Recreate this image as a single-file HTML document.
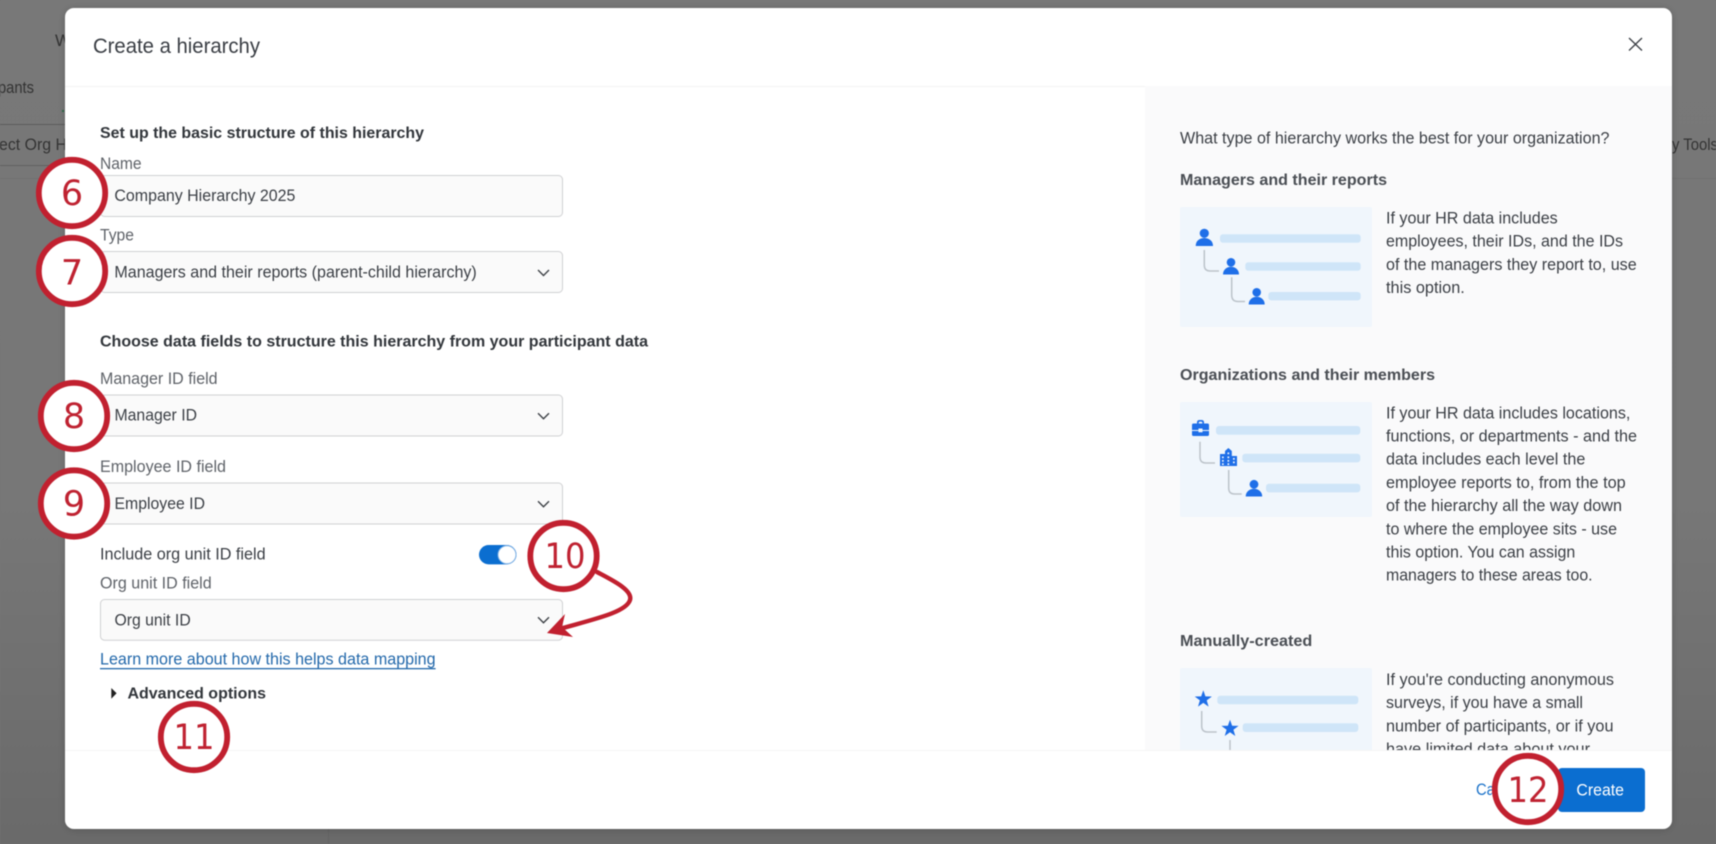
<!DOCTYPE html>
<html lang="en">
<head>
<meta charset="utf-8">
<title>Create a hierarchy</title>
<style>
html,body{margin:0;padding:0;width:1716px;height:844px;overflow:hidden;background:#757575}
svg{display:block;position:absolute;left:0;top:0;filter:blur(.45px)}
text{font-family:"Liberation Sans",Arial,sans-serif;font-size:16.5px;fill:#3b3f45}
.t{font-size:21.5px;fill:#3a3e44}
.b{font-weight:bold;fill:#32363b;font-size:16px}
.rh{font-weight:bold;fill:#4a4e54;font-size:16px}
.l{fill:#5f6369}
.bg{fill:#333;font-size:17px}
.n{font-family:"DejaVu Sans",sans-serif;font-size:35px;fill:#bf2231;text-anchor:middle}
.f{fill:#fafafa;stroke:#d0d1d3;stroke-width:1}
.fb{fill:none;stroke:#bcbdc0;stroke-width:1.2}
.ch{fill:none;stroke:#3f4348;stroke-width:1.4}
.bar{fill:#cfe5f8}
.cn{fill:none;stroke:#bcc3ca;stroke-width:1.5}
.bl{fill:#1f6fe8}
.c{fill:#fff;stroke:#c1202f;stroke-width:5.8}
</style>
</head>
<body>
<svg width="1716" height="844" viewBox="0 0 1716 844" xmlns="http://www.w3.org/2000/svg">
<defs>
<linearGradient id="bgg" x1="0" y1="0" x2="0" y2="1"><stop offset="0" stop-color="#787878"/><stop offset=".6" stop-color="#777"/><stop offset="1" stop-color="#6a6a6a"/></linearGradient>
<filter id="sh" x="-5%" y="-5%" width="110%" height="110%"><feDropShadow dx="0" dy="1" stdDeviation="4" flood-color="#000" flood-opacity=".18"/></filter>
<clipPath id="cp"><rect x="1145" y="87" width="527" height="663"/></clipPath>
</defs>

<!-- background page -->
<rect width="1716" height="844" fill="url(#bgg)"/>
<text class="bg" x="55" y="46">W</text>
<text class="bg" x="-2" y="93" textLength="36" lengthAdjust="spacingAndGlyphs">pants</text>
<rect x="62" y="110" width="2" height="2" fill="#2f6b4a"/>
<text class="bg" x="-1" y="150" textLength="68" lengthAdjust="spacingAndGlyphs">ect Org H</text>
<text class="bg" x="1672" y="150" textLength="46" lengthAdjust="spacingAndGlyphs">y Tools</text>
<rect x="0" y="124" width="66" height="1" fill="#5c5c5c"/>
<rect x="0" y="165" width="66" height="1" fill="#606060"/>
<rect x="0" y="178" width="66" height="1" fill="#707070"/>
<rect x="1672" y="178" width="44" height="1" fill="#707070"/>
<rect x="328" y="829" width="1" height="15" fill="#636363"/>

<!-- modal -->
<rect x="65" y="8" width="1607" height="821" rx="9" fill="#fff" filter="url(#sh)"/>
<rect x="65" y="86" width="1080" height="1" fill="#f3f3f3"/>
<rect x="1145" y="86" width="527" height="664" fill="#fafafb"/>

<text class="t" x="93" y="53" textLength="167" lengthAdjust="spacingAndGlyphs">Create a hierarchy</text>
<path d="M1629 38L1642 50.5M1642 38L1629 50.5" stroke="#3a3e44" stroke-width="1.3" fill="none"/>

<!-- left form -->
<text class="b" x="100" y="138" textLength="324" lengthAdjust="spacingAndGlyphs">Set up the basic structure of this hierarchy</text>
<text class="l" x="100" y="169" textLength="41.6" lengthAdjust="spacingAndGlyphs">Name</text>
<rect class="f" x="100.5" y="175.5" width="462" height="41" rx="4"/>
<text x="114.4" y="201" textLength="181" lengthAdjust="spacingAndGlyphs">Company Hierarchy 2025</text>

<text class="l" x="100" y="240.5" textLength="34" lengthAdjust="spacingAndGlyphs">Type</text>
<rect class="f" x="100.5" y="251.5" width="462" height="41" rx="4"/>
<text x="114.4" y="277.5" textLength="362.4" lengthAdjust="spacingAndGlyphs">Managers and their reports (parent-child hierarchy)</text>
<path class="ch" d="M538 270L543.5 275.5L549 270"/>

<text class="b" x="100" y="346.5" textLength="548" lengthAdjust="spacingAndGlyphs">Choose data fields to structure this hierarchy from your participant data</text>
<text class="l" x="100" y="384" textLength="117.6" lengthAdjust="spacingAndGlyphs">Manager ID field</text>
<rect class="f" x="100.5" y="395" width="462" height="41" rx="4"/>
<text x="114.5" y="420.7" textLength="82.5" lengthAdjust="spacingAndGlyphs">Manager ID</text>
<path class="ch" d="M538 413.2L543.5 418.7L549 413.2"/>

<text class="l" x="100" y="472" textLength="126" lengthAdjust="spacingAndGlyphs">Employee ID field</text>
<rect class="f" x="100.5" y="483" width="462" height="41" rx="4"/>
<text x="114.5" y="509" textLength="90.5" lengthAdjust="spacingAndGlyphs">Employee ID</text>
<path class="ch" d="M538 501.2L543.5 506.7L549 501.2"/>

<text x="100" y="559.3" textLength="165.6" lengthAdjust="spacingAndGlyphs">Include org unit ID field</text>
<rect x="479" y="545" width="37.5" height="19.4" rx="9.7" fill="#0b6ed0"/>
<circle cx="507" cy="554.7" r="9" fill="#fff" stroke="#7db0e4" stroke-width="1"/>

<text class="l" x="100" y="588.3" textLength="111.7" lengthAdjust="spacingAndGlyphs">Org unit ID field</text>
<rect class="f" x="100.5" y="599.5" width="462" height="40.7" rx="4"/>
<text x="114.5" y="625.7" textLength="76.2" lengthAdjust="spacingAndGlyphs">Org unit ID</text>
<path class="ch" d="M538 617.2L543.5 622.7L549 617.2"/>

<text x="100" y="664.7" textLength="335.6" lengthAdjust="spacingAndGlyphs" style="fill:#2469ab">Learn more about how this helps data mapping</text>
<rect x="100" y="668" width="335.6" height="1.3" fill="#2469ab"/>

<path d="M111.3 688L116.6 693.3L111.3 698.7Z" fill="#222"/>
<text class="b" x="127.5" y="698.3" textLength="138.5" lengthAdjust="spacingAndGlyphs">Advanced options</text>

<!-- right panel -->
<g clip-path="url(#cp)">
<text x="1180" y="143.3" textLength="429.5" lengthAdjust="spacingAndGlyphs">What type of hierarchy works the best for your organization?</text>
<text class="rh" x="1180" y="185" textLength="207" lengthAdjust="spacingAndGlyphs">Managers and their reports</text>

<!-- illustration 1 -->
<rect x="1180" y="207" width="192" height="120" rx="2" fill="#f0f6fc"/>
<rect class="bar" x="1220" y="234.3" width="140.7" height="8.4" rx="3"/>
<rect class="bar" x="1245.3" y="262.3" width="115.4" height="8.4" rx="3"/>
<rect class="bar" x="1268.3" y="292" width="92.4" height="8.4" rx="3"/>
<path class="cn" d="M1204.3 250V265Q1204.3 271 1210.3 271H1219"/>
<path class="cn" d="M1231.7 277.3V295Q1231.7 301.5 1238 301.5H1245"/>
<circle class="bl" cx="1204.3" cy="233.3" r="4.6"/>
<path class="bl" d="M1195.7 246C1195.7 240.5 1200 238 1204.3 238C1208.6 238 1213 240.5 1213 246Z"/>
<circle class="bl" cx="1231" cy="262.3" r="4.3"/>
<path class="bl" d="M1223 274.5C1223 269.5 1227 266.8 1231 266.8C1235 266.8 1239 269.5 1239 274.5Z"/>
<circle class="bl" cx="1256.7" cy="292.3" r="4.3"/>
<path class="bl" d="M1248.7 304.5C1248.7 299.5 1252.7 296.8 1256.7 296.8C1260.7 296.8 1264.7 299.5 1264.7 304.5Z"/>

<text x="1386" y="223.3" textLength="171.7" lengthAdjust="spacingAndGlyphs">If your HR data includes</text>
<text x="1386" y="246.6" textLength="237" lengthAdjust="spacingAndGlyphs">employees, their IDs, and the IDs</text>
<text x="1386" y="269.8" textLength="250.7" lengthAdjust="spacingAndGlyphs">of the managers they report to, use</text>
<text x="1386" y="293" textLength="78.8" lengthAdjust="spacingAndGlyphs">this option.</text>

<text class="rh" x="1180" y="380" textLength="255" lengthAdjust="spacingAndGlyphs">Organizations and their members</text>

<!-- illustration 2 -->
<rect x="1180" y="402" width="192" height="115" rx="2" fill="#f0f6fc"/>
<rect class="bar" x="1216" y="426" width="144.3" height="8.7" rx="3"/>
<rect class="bar" x="1242.3" y="453.7" width="118" height="8.7" rx="3"/>
<rect class="bar" x="1266" y="483.7" width="94.3" height="8.7" rx="3"/>
<path class="cn" d="M1200 441.7V457Q1200 463 1206 463H1215"/>
<path class="cn" d="M1228.7 470V488Q1228.7 494 1234.7 494H1241.7"/>
<path class="bl" d="M1197 424V422.3Q1197 420 1199.5 420H1201.5Q1204 420 1204 422.3V424H1202.4V422.9Q1202.4 421.6 1201 421.6H1200Q1198.7 421.6 1198.7 422.9V424Z"/>
<path class="bl" d="M1193.5 423.5H1207.5Q1209 423.5 1209 425V430H1202.5V428.5H1198.5V430H1192V425Q1192 423.5 1193.5 423.5Z"/>
<path class="bl" d="M1192 431H1198.5V432.3H1202.5V431H1209V434.5Q1209 436 1207.5 436H1193.5Q1192 436 1192 434.5Z"/>
<path class="bl" d="M1220 466V454H1225V451L1228.4 448L1231.8 451V454V456H1237V466Z"/>
<g fill="#f0f6fc">
<rect x="1222" y="456.5" width="1.7" height="1.7"/><rect x="1227.5" y="456.5" width="1.7" height="1.7"/><rect x="1233" y="458" width="1.7" height="1.7"/>
<rect x="1227.5" y="452.5" width="1.7" height="1.7"/>
<rect x="1222" y="460" width="1.7" height="1.7"/><rect x="1227.5" y="460" width="1.7" height="1.7"/><rect x="1233" y="461.5" width="1.7" height="1.7"/>
<rect x="1222" y="463.3" width="1.7" height="1.7"/><rect x="1227.5" y="463.3" width="1.7" height="1.7"/>
</g>
<circle class="bl" cx="1254" cy="484.3" r="4.4"/>
<path class="bl" d="M1245.7 496.5C1245.7 491.5 1250 488.8 1254 488.8C1258 488.8 1262.2 491.5 1262.2 496.5Z"/>

<text x="1386" y="418.3" textLength="244.4" lengthAdjust="spacingAndGlyphs">If your HR data includes locations,</text>
<text x="1386" y="441.5" textLength="251" lengthAdjust="spacingAndGlyphs">functions, or departments - and the</text>
<text x="1386" y="464.7" textLength="199.3" lengthAdjust="spacingAndGlyphs">data includes each level the</text>
<text x="1386" y="487.9" textLength="239.7" lengthAdjust="spacingAndGlyphs">employee reports to, from the top</text>
<text x="1386" y="511.1" textLength="236" lengthAdjust="spacingAndGlyphs">of the hierarchy all the way down</text>
<text x="1386" y="534.3" textLength="231" lengthAdjust="spacingAndGlyphs">to where the employee sits - use</text>
<text x="1386" y="557.5" textLength="189.3" lengthAdjust="spacingAndGlyphs">this option. You can assign</text>
<text x="1386" y="580.7" textLength="206.6" lengthAdjust="spacingAndGlyphs">managers to these areas too.</text>

<text class="rh" x="1180" y="646" textLength="132.3" lengthAdjust="spacingAndGlyphs">Manually-created</text>

<!-- illustration 3 -->
<rect x="1180" y="668" width="192" height="120" rx="2" fill="#f0f6fc"/>
<rect class="bar" x="1217.3" y="695.7" width="141" height="8.6" rx="3"/>
<rect class="bar" x="1242.7" y="723.3" width="115.6" height="8.7" rx="3"/>
<path class="cn" d="M1201.7 711V726Q1201.7 732 1207.7 732H1216.7"/>
<path class="cn" d="M1230 740V760"/>
<polygon class="bl" transform="translate(1203.3 699.3)" points="0,-9 2.12,-2.91 8.56,-2.78 3.42,1.11 5.29,7.28 0,3.6 -5.29,7.28 -3.42,1.11 -8.56,-2.78 -2.12,-2.91"/>
<polygon class="bl" transform="translate(1230 728.7)" points="0,-9 2.12,-2.91 8.56,-2.78 3.42,1.11 5.29,7.28 0,3.6 -5.29,7.28 -3.42,1.11 -8.56,-2.78 -2.12,-2.91"/>

<text x="1386" y="685" textLength="228" lengthAdjust="spacingAndGlyphs">If you're conducting anonymous</text>
<text x="1386" y="708.2" textLength="197" lengthAdjust="spacingAndGlyphs">surveys, if you have a small</text>
<text x="1386" y="731.4" textLength="227.5" lengthAdjust="spacingAndGlyphs">number of participants, or if you</text>
<text x="1386" y="754.6" textLength="204" lengthAdjust="spacingAndGlyphs">have limited data about your</text>
</g>

<!-- footer -->
<rect x="65" y="750" width="1607" height="1" fill="#f5f5f5"/>
<text x="1476" y="795" textLength="46" lengthAdjust="spacingAndGlyphs" style="fill:#1b72c9">Cancel</text>
<rect x="1558" y="768" width="87" height="44" rx="4" fill="#0b6ed0"/>
<text x="1576.4" y="795.3" textLength="47.6" lengthAdjust="spacingAndGlyphs" style="fill:#fff">Create</text>

<!-- annotations -->
<circle class="c" cx="72" cy="193" r="33.2"/><text class="n" x="72" y="205">6</text>
<circle class="c" cx="72" cy="271" r="33.2"/><text class="n" x="72" y="284.5">7</text>
<circle class="c" cx="74" cy="416" r="33.2"/><text class="n" x="74" y="428">8</text>
<circle class="c" cx="74" cy="503.5" r="33.2"/><text class="n" x="74" y="515.5">9</text>
<circle class="c" cx="563.5" cy="556" r="33.2"/><text class="n" x="565" y="568" textLength="41" lengthAdjust="spacingAndGlyphs">10</text>
<circle class="c" cx="194" cy="737" r="33.2"/><text class="n" x="194" y="749" textLength="41" lengthAdjust="spacingAndGlyphs">11</text>
<circle class="c" cx="1528" cy="789" r="33.2"/><text class="n" x="1528" y="802" textLength="41" lengthAdjust="spacingAndGlyphs">12</text>

<path d="M597 572C612 580 633 590 630 600C626 613 590 620 556 630" fill="none" stroke="#c1202f" stroke-width="4.4" stroke-linecap="round"/>
<path d="M547 633L565 614L562 627L573 637Z" fill="#c1202f"/>
</svg>
</body>
</html>
